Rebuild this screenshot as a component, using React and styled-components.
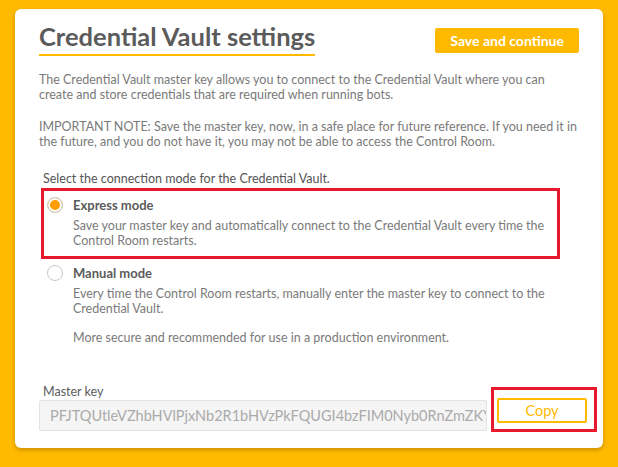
import styled, { createGlobalStyle } from "styled-components";

const GlobalStyle = createGlobalStyle`
  html, body {
    margin: 0;
    padding: 0;
    background: #ffba00;
  }
  body {
    font-family: Lato, "Open Sans", sans-serif;
  }
`;

const Page = styled.div`
  width: 618px;
  height: 467px;
  padding: 9px 15px;
  box-sizing: border-box;
`;

const Card = styled.div`
  width: 588px;
  height: 439px;
  box-sizing: border-box;
  background: #fff;
  border-radius: 6px;
  box-shadow: 0 2px 4px rgba(140, 90, 0, 0.45);
  padding: 13px 24px 0 24px;
`;

const Header = styled.div`
  display: flex;
  justify-content: space-between;
  align-items: flex-start;
`;

const Title = styled.h1`
  margin: 0;
  font-size: 25.5px;
  line-height: 28px;
  font-weight: 700;
  color: #5b5b5b;
  border-bottom: 2px solid #ffba00;
  padding-bottom: 4px;
`;

const PrimaryButton = styled.button`
  margin-top: 6px;
  height: 25px;
  padding: 0 15px;
  border: none;
  border-radius: 2px;
  background: #ffba00;
  color: #fff;
  font-family: inherit;
  font-size: 14px;
  font-weight: 700;
`;

const Paragraph = styled.p`
  margin: ${(p) => p.$top || 0}px 0 0 0;
  font-size: 12.5px;
  line-height: 15px;
  color: #7a7a7a;
`;

const Prompt = styled.div`
  margin: 22px 0 0 4px;
  font-size: 12.5px;
  line-height: 15px;
  color: #555;
`;

const Highlight = styled.div`
  border: 3px solid #e8192c;
  margin: ${(p) => p.$margin || 0};
  padding: ${(p) => p.$pad || 0};
  flex-shrink: 0;
`;

const Option = styled.div`
  display: grid;
  grid-template-columns: 16px 1fr;
  column-gap: 10px;
  padding: ${(p) => p.$pad || "0"};
`;

const Radio = styled.span`
  width: 16px;
  height: 16px;
  box-sizing: border-box;
  border-radius: 50%;
  border: 1px solid #c8c8c8;
  background: ${(p) => (p.$checked ? "#ff9d00" : "#fff")};
  box-shadow: ${(p) => (p.$checked ? "inset 0 0 0 2px #fff" : "none")};
  margin-top: 1px;
`;

const OptionLabel = styled.div`
  font-size: 13px;
  line-height: 18px;
  font-weight: 700;
  color: #5b5b5b;
`;

const OptionText = styled.div`
  grid-column: 2;
  font-size: 12.5px;
  line-height: 15px;
  color: #7a7a7a;
  margin-top: ${(p) => p.$top || 0}px;
`;

const KeyLabel = styled.div`
  margin: 39px 0 0 4px;
  font-size: 12.5px;
  line-height: 15px;
  color: #5b5b5b;
`;

const KeyRow = styled.div`
  display: flex;
  align-items: flex-end;
  margin-top: -12px;
`;

const KeyInput = styled.div`
  width: 448px;
  height: 31px;
  flex-shrink: 0;
  box-sizing: border-box;
  margin-bottom: 1px;
  background: #f5f5f5;
  border: 1px solid #e3e3e3;
  border-radius: 2px;
  padding: 0 10px;
  font-size: 14.5px;
  line-height: 29px;
  color: #aaa;
  white-space: nowrap;
  overflow: hidden;
`;

const OutlineButton = styled.button`
  display: block;
  width: 90px;
  height: 25px;
  box-sizing: border-box;
  border: 2px solid #ffba00;
  border-radius: 2px;
  background: #fff;
  color: #ffba00;
  font-family: inherit;
  font-size: 14.5px;
`;

const App = () => {
  return (
    <Page>
      <GlobalStyle />
      <Card>
        <Header>
          <Title>Credential Vault settings</Title>
          <PrimaryButton>Save and continue</PrimaryButton>
        </Header>
        <Paragraph $top={16}>
          The Credential Vault master key allows you to connect to the Credential Vault where you can
          create and store credentials that are required when running bots.
        </Paragraph>
        <Paragraph $top={17}>
          IMPORTANT NOTE: Save the master key, now, in a safe place for future reference. If you need it in
          the future, and you do not have it, you may not be able to access the Control Room.
        </Paragraph>
        <Prompt>Select the connection mode for the Credential Vault.</Prompt>
        <Highlight $margin="2px 19px 0 2px">
          <Option $pad="5px 8px 8px 3px">
            <Radio $checked />
            <OptionLabel>Express mode</OptionLabel>
            <OptionText $top={4}>
              Save your master key and automatically connect to the Credential Vault every time the
              Control Room restarts.
            </OptionText>
          </Option>
        </Highlight>
        <Option $pad="5px 30px 0 8px">
          <Radio />
          <OptionLabel>Manual mode</OptionLabel>
          <OptionText $top={4}>
            Every time the Control Room restarts, manually enter the master key to connect to the
            Credential Vault.
          </OptionText>
          <OptionText $top={14}>
            More secure and recommended for use in a production environment.
          </OptionText>
        </Option>
        <KeyLabel>Master key</KeyLabel>
        <KeyRow>
          <KeyInput>PFJTQUtleVZhbHVlPjxNb2R1bHVzPkFQUGI4bzFIM0Nyb0RnZmZKY</KeyInput>
          <Highlight $margin="0 0 0 4px" $pad="8px 7px 6px 3px">
            <OutlineButton>Copy</OutlineButton>
          </Highlight>
        </KeyRow>
      </Card>
    </Page>
  );
};

export default App;
